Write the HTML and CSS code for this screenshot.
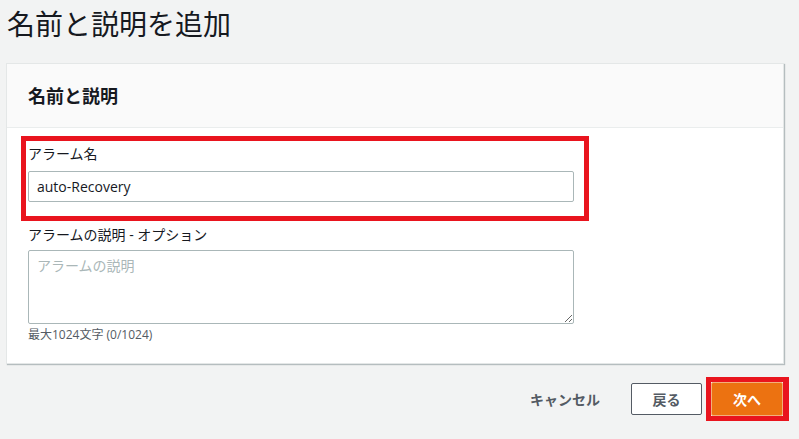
FILE: index.html
```html
<!DOCTYPE html>
<html lang="ja">

<head>
    <meta charset="UTF-8">
    <meta name="viewport" content="width=device-width, initial-scale=1.0">
    <title>名前と説明を追加</title>
    <link rel="stylesheet" href="styles.css">
</head>

<body>
    <h1 class="page-title">名前と説明を追加</h1>

    <div class="card">
        <div class="card-header">
            <h2>名前と説明</h2>
        </div>
        <div class="card-body">
            <div class="highlight">
                <label class="field-label" for="alarmName">アラーム名</label>
                <input class="text-input" type="text" id="alarmName" value="auto-Recovery">
            </div>

            <label class="field-label second" for="alarmDesc">アラームの説明 - オプション</label>
            <textarea class="text-area" id="alarmDesc" placeholder="アラームの説明"></textarea>
            <div class="field-hint">最大1024文字 (0/1024)</div>
        </div>
    </div>

    <div class="actions">
        <button class="btn-link">キャンセル</button>
        <button class="btn-normal">戻る</button>
        <span class="highlight-btn">
            <button class="btn-primary">次へ</button>
        </span>
    </div>
</body>

</html>
```

FILE: styles.css
```css
body {
    margin: 0;
    padding: 0;
    background-color: #f2f3f3;
    font-family: "Open Sans", "Noto Sans CJK JP", sans-serif;
    color: #16191f;
}

.page-title {
    margin: 0;
    padding: 6px 7px 21px;
    font-size: 28px;
    line-height: 36px;
    font-weight: 400;
}

.card {
    margin-left: 6px;
    width: 776px;
    background-color: #fff;
    border: 1px solid #e4e7e7;
    box-shadow: 1px 1px 1px rgba(0, 28, 36, 0.25);
}

.card-header {
    height: 64px;
    box-sizing: border-box;
    padding: 0 21px;
    display: flex;
    align-items: center;
    background-color: #fafafa;
    border-bottom: 1px solid #eaeded;
}

.card-header h2 {
    margin: 0;
    font-size: 18px;
    font-weight: 700;
    line-height: 22px;
}

.card-body {
    padding: 8px 21px 21px;
}

.highlight {
    width: 546px;
    margin-left: -7px;
    padding: 3px 10px 14px 2px;
    border: 5px solid #e9141e;
}

.field-label {
    display: block;
    font-size: 14px;
    line-height: 20px;
    color: #16191f;
    margin-bottom: 7px;
}

.field-label.second {
    margin-top: 4px;
    margin-bottom: 5px;
}

.text-input,
.text-area {
    display: block;
    width: 546px;
    box-sizing: border-box;
    border: 1px solid #aab7b8;
    border-radius: 2px;
    font-family: "Open Sans", "Noto Sans CJK JP", sans-serif;
    font-size: 14px;
    color: #16191f;
    margin: 0;
}

.text-input {
    height: 31px;
    padding: 0 8px;
}

.text-area {
    height: 74px;
    padding: 4px 8px;
    resize: vertical;
}

.text-area::placeholder {
    color: #aab7b8;
}

.field-hint {
    margin-top: 4px;
    font-size: 12px;
    line-height: 14px;
    color: #545b64;
}

.actions {
    display: flex;
    justify-content: flex-end;
    align-items: center;
    margin-top: 13px;
    padding-right: 10px;
}

.actions button {
    font-family: "Open Sans", "Noto Sans CJK JP", sans-serif;
    font-size: 14px;
    font-weight: 700;
    cursor: pointer;
}

.btn-link {
    background: none;
    border: none;
    color: #545b64;
    padding: 0 20px;
    margin-right: 11px;
}

.btn-normal {
    width: 71px;
    height: 32px;
    background-color: #fff;
    border: 1px solid #545b64;
    border-radius: 2px;
    color: #545b64;
    margin-right: 4px;
}

.highlight-btn {
    display: inline-flex;
    border: 5px solid #e9141e;
    border-right-width: 6px;
}

.btn-primary {
    width: 72px;
    height: 34px;
    background-color: #ec7211;
    border: 1px solid #f3b07c;
    border-radius: 2px;
    color: #fff;
}
```
